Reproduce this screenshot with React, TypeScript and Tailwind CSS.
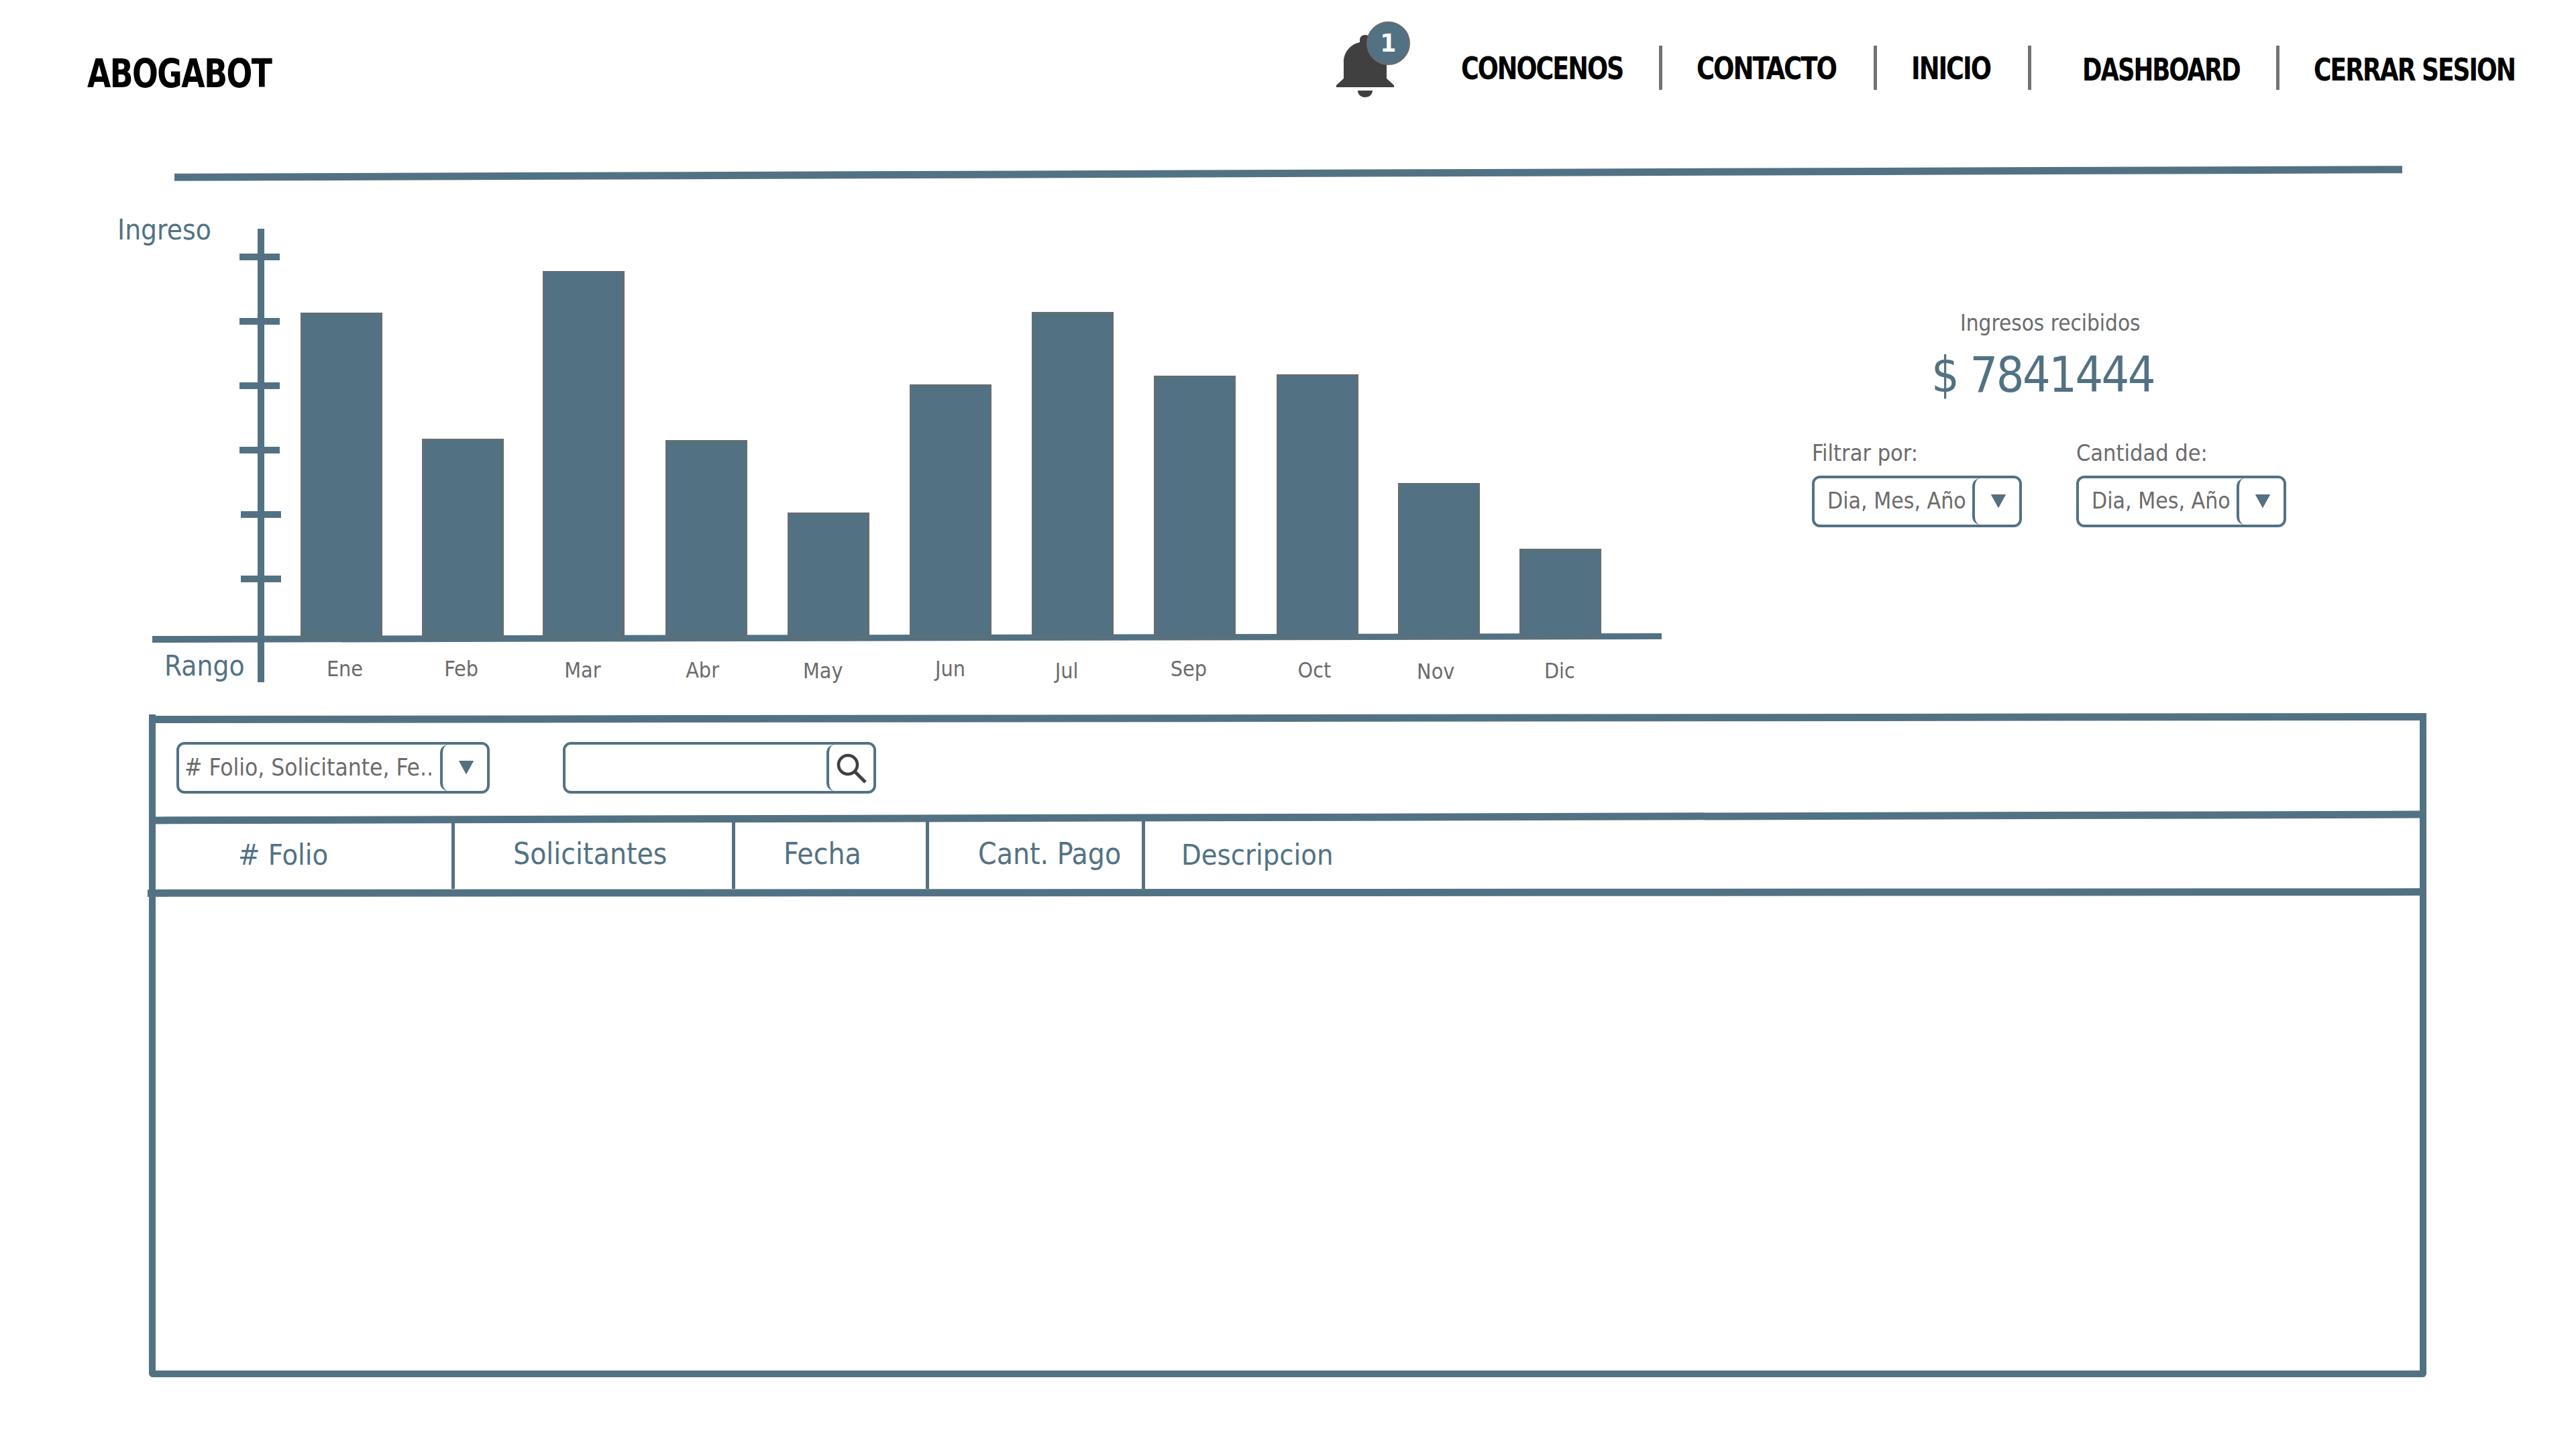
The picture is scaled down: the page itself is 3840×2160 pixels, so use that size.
import { FC } from 'react';

const bars = [
  { label: 'Ene', top: 466, dx: 0, shift: 5, labelY: 0 },
  { label: 'Feb', top: 654, dx: -1, shift: -3, labelY: 0 },
  { label: 'Mar', top: 404, dx: -2, shift: -4, labelY: 2 },
  { label: 'Abr', top: 656, dx: -1, shift: -7, labelY: 2 },
  { label: 'May', top: 764, dx: -1, shift: -9, labelY: 3 },
  { label: 'Jun', top: 573, dx: 0, shift: -1, labelY: 0 },
  { label: 'Jul', top: 465, dx: 0, shift: -9, labelY: 3 },
  { label: 'Sep', top: 560, dx: 0, shift: -9, labelY: 0 },
  { label: 'Oct', top: 558, dx: 1, shift: -3, labelY: 2 },
  { label: 'Nov', top: 720, dx: 1, shift: -4, labelY: 4 },
  { label: 'Dic', top: 818, dx: 0, shift: -1, labelY: 3 },
];

const ticks = [383, 479, 575, 671, 767, 863];

const navItems = [
  { label: 'CONOCENOS', box: 'w-[300px] border-r-[5px]', text: 'scale-x-[0.884] mt-[2px]' },
  { label: 'CONTACTO', box: 'w-[320px] border-r-[5px] pl-[51px]', text: 'scale-x-[0.895] mt-[2px]' },
  { label: 'INICIO', box: 'w-[230px] border-r-[5px] pl-[51px]', text: 'scale-x-[0.89] mt-[2px]' },
  { label: 'DASHBOARD', box: 'w-[370px] border-r-[5px] pl-[76px] pt-[4px]', text: 'scale-x-[0.857] mt-[2px]' },
  { label: 'CERRAR SESION', box: 'w-[350px] pl-[51px] pt-[4px]', text: 'scale-x-[0.872] mt-[2px]' },
];

const columns = [
  { label: '# Folio', box: 'w-[446px] pl-[123px] border-r-[5px] text-[43px]' },
  { label: 'Solicitantes', box: 'w-[418px] pl-[87px] pb-[3px] border-r-[5px] text-[44px]' },
  { label: 'Fecha', box: 'w-[289px] pl-[72px] pb-[3px] border-r-[5px] text-[44px]' },
  { label: 'Cant. Pago', box: 'w-[322px] pl-[73px] pb-[3px] border-r-[5px] text-[44px]' },
  { label: 'Descripcion', box: 'flex-1 pl-[54px] text-[43px]' },
];

const Caret: FC = () => (
  <svg viewBox="0 0 22 20" className="h-[20px] w-[22px]">
    <path d="M0.5 0.5H21.5L11 19.5Z" fill="#527284" stroke="#6b6b6b" strokeWidth="1" />
  </svg>
);

const SelectBox: FC<{ text: string; className?: string; textClass?: string }> = ({
  text,
  className = 'w-[313px]',
  textClass = 'pl-[19px] text-[33.5px]',
}) => (
  <div className={`flex h-[77px] items-stretch rounded-[12px] border-[4px] border-[#527284] ${className}`}>
    <div className={`flex flex-1 items-center overflow-hidden whitespace-nowrap text-[#6b6b6b] ${textClass}`}>
      {text}
    </div>
    <div className="flex w-[70px] items-center justify-center rounded-[12px] border-l-[4px] border-[#527284] pb-[2px] pl-[4px]">
      <Caret />
    </div>
  </div>
);

const Chart: FC = () => (
  <div className="relative ml-[227px] h-[730px] w-[2250px]">
    {/* axes */}
    <svg className="absolute left-0 top-0" width="2250" height="730" viewBox="0 0 2250 730">
      <path d="M0 607L2250 603V612L0 617Z" fill="#527284" />
      <rect x="157" y="0" width="10" height="676" fill="#527284" />
      {ticks.map((y, i) => (
        <rect key={y} x={i < 4 ? 130 : 132} y={y - 341 - 5} width="60" height="10" fill="#527284" />
      ))}
    </svg>
    <div className="absolute left-[-52px] top-[-28px] text-[42px] leading-[60px] text-[#527284]">Ingreso</div>
    <div className="absolute left-[18px] top-[622px] text-[42px] leading-[60px] text-[#527284]">Rango</div>

    {/* bars */}
    <div className="absolute left-[221px] top-0 flex h-[609px] items-end gap-[59.7px]">
      {bars.map((b) => (
        <div
          key={b.label}
          className="w-[122px] border-2 border-[#6b6b6b] bg-[#527284]"
          style={{ height: 950 - b.top, transform: `translateX(${b.dx}px)` }}
        />
      ))}
    </div>
    <div className="absolute left-[221px] top-[632px] flex gap-[59.7px]">
      {bars.map((b) => (
        <div
          key={b.label}
          className="w-[122px] text-center text-[32px] leading-[48px] text-[#6b6b6b]"
          style={{ transform: `translate(${b.shift}px, ${b.labelY}px)` }}
        >
          {b.label}
        </div>
      ))}
    </div>
  </div>
);

const App: FC = () => {
  return (
    <div className="relative flex h-[2160px] w-[3840px] flex-col bg-white font-['DejaVu_Sans',sans-serif] [font-stretch:condensed]">
      {/* Header */}
      <header className="flex h-[134px] items-end justify-between pl-[130px] pr-[92px]">
        <div className="mb-[-11px] origin-left scale-x-[0.875] text-[58px] font-bold leading-[70px] tracking-[-0.03em] text-black">
          ABOGABOT
        </div>
        <nav className="flex h-[66px] items-center">
          <div className="relative mr-[100px] h-[66px] w-[86px]">
            <svg viewBox="0 0 86 93" className="absolute left-0 top-[-16px] h-[93px] w-[86px] fill-[#404040]">
              <path d="M35 11V7a8 7 0 0 1 16 0V11C65 14 75 26 75 40V65L86 75V78H0V75L11 65V40C11 26 21 14 35 11Z M32 83H54C54 89 49 93 43 93C37 93 32 89 32 83Z" />
            </svg>
            <div className="absolute left-[45px] top-[-36px] flex h-[65px] w-[65px] items-center justify-center rounded-full border-2 border-[#6b6b6b] bg-[#527284] text-[38px] font-bold text-white">
              1
            </div>
          </div>
          {navItems.map((item) => (
            <div key={item.label} className={`flex h-[66px] items-center border-[#737373] ${item.box}`}>
              <span className={`origin-left whitespace-nowrap text-[46px] font-bold tracking-[-0.05em] text-black ${item.text}`}>
                {item.label}
              </span>
            </div>
          ))}
        </nav>
      </header>

      {/* Rule under the header */}
      <div className="ml-[260px] mt-[119px] h-[11px] w-[3321px] -rotate-[0.2deg] bg-[#527284]" />

      {/* Chart and totals */}
      <section className="mt-[77px] flex h-[730px]">
        <Chart />
        <div className="ml-[224px] flex w-[707px] flex-col items-start pt-[117px]">
          <div className="w-[707px] pl-[221px] text-[33px] leading-[48px] text-[#6b6b6b]">Ingresos recibidos</div>
          <div className="mt-[3px] w-[707px] pl-[178px] text-[73px] leading-[100px] tracking-[-0.035em] text-[#527284]">
            $ 7841444
          </div>
          <div className="mt-[42px] flex gap-[81px]">
            <div>
              <div className="mb-[10px] text-[34px] leading-[48px] text-[#6b6b6b]">Filtrar por:</div>
              <SelectBox text="Dia, Mes, Año" />
            </div>
            <div>
              <div className="mb-[10px] text-[34px] leading-[48px] text-[#6b6b6b]">Cantidad de:</div>
              <SelectBox text="Dia, Mes, Año" />
            </div>
          </div>
        </div>
      </section>

      {/* Table */}
      <section className="ml-[222px] mt-[-6px] flex h-[988px] w-[3395px] flex-col rounded-b-[6px] border-x-[10px] border-b-[10px] border-[#527284]">
        <div className="mx-[-10px] h-[11px] -rotate-[0.07deg] bg-[#527284]" />
        <div className="flex h-[137px] items-center gap-[109px] pl-[31px]">
          <SelectBox text="# Folio, Solicitante, Fe.." className="w-[467px]" textClass="pl-[8px] text-[35px]" />
          <div className="flex h-[77px] w-[467px] items-stretch rounded-[12px] border-[4px] border-[#527284]">
            <div className="flex-1" />
            <div className="flex w-[70px] items-center justify-center rounded-[12px] border-l-[4px] border-[#527284]">
              <svg viewBox="0 0 48 48" className="h-[48px] w-[48px]" fill="none" stroke="#404040">
                <circle cx="19" cy="19" r="14" strokeWidth="4.5" />
                <path d="M29 29L45 45" strokeWidth="5" />
              </svg>
            </div>
          </div>
        </div>
        <div className="h-[11px] -rotate-[0.15deg] bg-[#527284]" />
        <div className="flex h-[101px] items-stretch">
          {columns.map((col) => (
            <div key={col.label} className={`flex items-center border-[#527284] text-[#527284] ${col.box}`}>
              {col.label}
            </div>
          ))}
        </div>
        <div className="ml-[-12px] mr-[-10px] h-[11px] -rotate-[0.03deg] bg-[#527284]" />
        <div className="flex-1" />
      </section>
    </div>
  );
};

export default App;
